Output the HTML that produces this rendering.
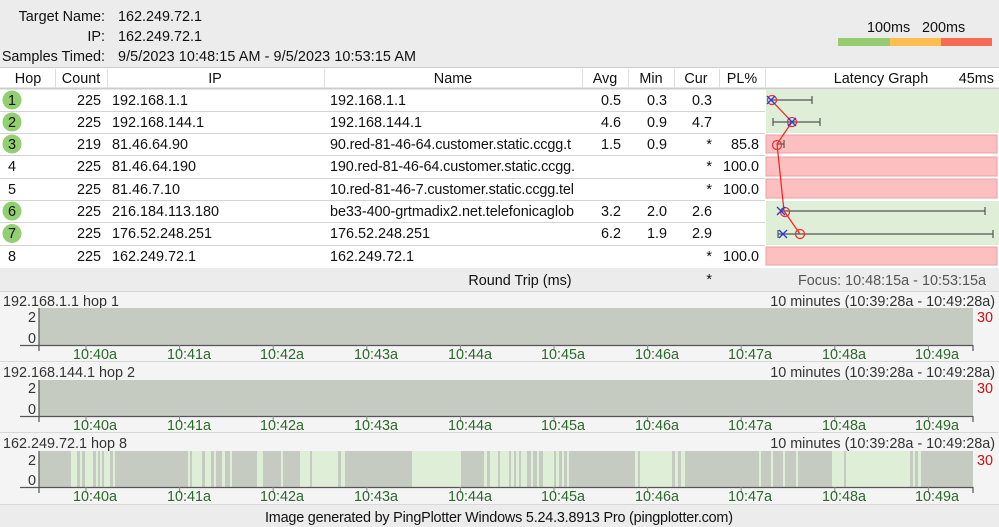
<!DOCTYPE html>
<html><head><meta charset="utf-8"><style>
html,body{margin:0;padding:0;background:#ececec;}
svg{display:block;font-family:"Liberation Sans","DejaVu Sans",sans-serif;font-size:14.4px;}
</style></head><body>
<svg width="999" height="527" viewBox="0 0 999 527" xmlns="http://www.w3.org/2000/svg">
<rect width="999" height="527" fill="#ececec"/>
<g fill="#111">
<text x="105" y="21" text-anchor="end">Target Name:</text>
<text x="118" y="21">162.249.72.1</text>
<text x="105" y="41" text-anchor="end">IP:</text>
<text x="118" y="41">162.249.72.1</text>
<text x="105" y="61" text-anchor="end">Samples Timed:</text>
<text x="118" y="61" textLength="298">9/5/2023 10:48:15 AM - 9/5/2023 10:53:15 AM</text>
<text x="867" y="32">100ms</text>
<text x="922" y="32">200ms</text>
</g>
<rect x="838" y="38" width="52" height="8" fill="#95cc6f"/>
<rect x="890" y="38" width="51" height="8" fill="#fdbd4f"/>
<rect x="941" y="38" width="51" height="8" fill="#f76b55"/>
<rect x="0" y="67" width="999" height="201" fill="#fff"/>
<line x1="0" y1="67.5" x2="999" y2="67.5" stroke="#ccc"/>
<line x1="0" y1="88.5" x2="999" y2="88.5" stroke="#ccc" stroke-width="2"/>
<g stroke="#ddd">
<line x1="55.5" y1="69" x2="55.5" y2="88"/><line x1="107.5" y1="69" x2="107.5" y2="88"/>
<line x1="324.5" y1="69" x2="324.5" y2="88"/><line x1="582.5" y1="69" x2="582.5" y2="88"/>
<line x1="628.5" y1="69" x2="628.5" y2="88"/><line x1="674.5" y1="69" x2="674.5" y2="88"/>
<line x1="719.5" y1="69" x2="719.5" y2="88"/><line x1="765.5" y1="69" x2="765.5" y2="88"/>
</g>
<g fill="#111" text-anchor="middle">
<text x="28" y="83">Hop</text><text x="81" y="83">Count</text><text x="215" y="83">IP</text>
<text x="453" y="83">Name</text><text x="605" y="83">Avg</text><text x="651" y="83">Min</text>
<text x="696" y="83">Cur</text><text x="742" y="83">PL%</text><text x="881" y="83">Latency Graph</text>
</g>
<text x="994" y="83" text-anchor="end" fill="#111">45ms</text>
<rect x="766" y="90" width="233" height="43" fill="#dfeed6"/>
<rect x="766" y="135" width="231" height="18" fill="#fcc0c0" stroke="#eca0a0"/>
<rect x="766" y="157" width="231" height="19" fill="#fcc0c0" stroke="#eca0a0"/>
<rect x="766" y="179" width="231" height="19" fill="#fcc0c0" stroke="#eca0a0"/>
<rect x="766" y="201" width="233" height="44" fill="#dfeed6"/>
<rect x="766" y="247" width="231" height="18" fill="#fcc0c0" stroke="#eca0a0"/>
<g stroke="#d4d4d4">
<line x1="0" y1="111.5" x2="765" y2="111.5"/><line x1="0" y1="133.5" x2="765" y2="133.5"/>
<line x1="0" y1="155.5" x2="765" y2="155.5"/><line x1="0" y1="178.5" x2="765" y2="178.5"/>
<line x1="0" y1="200.5" x2="765" y2="200.5"/><line x1="0" y1="222.5" x2="765" y2="222.5"/>
<line x1="0" y1="245.5" x2="765" y2="245.5"/>
</g>
<g fill="#92cf70">
<circle cx="12" cy="100" r="9.5"/><circle cx="12" cy="122" r="9.5"/><circle cx="12" cy="144" r="9.5"/>
<circle cx="12" cy="211" r="9.5"/><circle cx="12" cy="233.5" r="9.5"/>
</g>
<g fill="#111">
<text x="8" y="105">1</text><text x="8" y="127">2</text><text x="8" y="149">3</text><text x="8" y="171">4</text>
<text x="8" y="194">5</text><text x="8" y="216">6</text><text x="8" y="238">7</text><text x="8" y="261">8</text>
</g>
<g fill="#111" text-anchor="end">
<text x="101" y="105">225</text><text x="101" y="127">225</text><text x="101" y="149">219</text><text x="101" y="171">225</text>
<text x="101" y="194">225</text><text x="101" y="216">225</text><text x="101" y="238">225</text><text x="101" y="261">225</text>
<text x="621" y="105">0.5</text><text x="667" y="105">0.3</text><text x="712" y="105">0.3</text>
<text x="621" y="127">4.6</text><text x="667" y="127">0.9</text><text x="712" y="127">4.7</text>
<text x="621" y="149">1.5</text><text x="667" y="149">0.9</text><text x="712" y="149">*</text><text x="759" y="149">85.8</text>
<text x="712" y="171">*</text><text x="759" y="171">100.0</text>
<text x="712" y="194">*</text><text x="759" y="194">100.0</text>
<text x="621" y="216">3.2</text><text x="667" y="216">2.0</text><text x="712" y="216">2.6</text>
<text x="621" y="238">6.2</text><text x="667" y="238">1.9</text><text x="712" y="238">2.9</text>
<text x="712" y="261">*</text><text x="759" y="261">100.0</text>
<text x="712" y="284">*</text>
</g>
<g fill="#111">
<text x="112" y="105">192.168.1.1</text><text x="112" y="127">192.168.144.1</text><text x="112" y="149">81.46.64.90</text>
<text x="112" y="171">81.46.64.190</text><text x="112" y="194">81.46.7.10</text><text x="112" y="216">216.184.113.180</text>
<text x="112" y="238">176.52.248.251</text><text x="112" y="261">162.249.72.1</text>
</g>
<g fill="#111">
<text x="330" y="105">192.168.1.1</text><text x="330" y="127">192.168.144.1</text>
<text x="330" y="149" textLength="241">90.red-81-46-64.customer.static.ccgg.t</text>
<text x="330" y="171" textLength="245">190.red-81-46-64.customer.static.ccgg.</text>
<text x="330" y="194" textLength="244">10.red-81-46-7.customer.static.ccgg.tel</text>
<text x="330" y="216" textLength="244">be33-400-grtmadix2.net.telefonicaglob</text>
<text x="330" y="238">176.52.248.251</text><text x="330" y="261">162.249.72.1</text>
</g>
<g stroke="#555" stroke-width="1.2">
<line x1="771" y1="100" x2="812" y2="100"/><line x1="812" y1="96" x2="812" y2="104"/>
<line x1="773" y1="122" x2="820" y2="122"/><line x1="773" y1="118" x2="773" y2="126"/><line x1="820" y1="118" x2="820" y2="126"/>
<line x1="777" y1="144" x2="784" y2="144"/><line x1="784" y1="140" x2="784" y2="148"/>
<line x1="780" y1="211" x2="985" y2="211"/><line x1="985" y1="207" x2="985" y2="215"/>
<line x1="778" y1="234" x2="993" y2="234"/><line x1="778" y1="230" x2="778" y2="238"/><line x1="993" y1="230" x2="993" y2="238"/>
</g>
<polyline points="771,100 792,122 777,144 784,211 800,234" fill="none" stroke="#f02020" stroke-width="1.2"/>
<g fill="none" stroke="#f03030" stroke-width="1.3">
<circle cx="772" cy="100" r="4.5"/><circle cx="792" cy="122" r="4.5"/><circle cx="777" cy="145" r="4.5"/>
<circle cx="785" cy="212" r="4.5"/><circle cx="800" cy="234" r="4.5"/>
</g>
<g stroke="#2a3ae0" stroke-width="1.3">
<path d="M767 96l8 8M775 96l-8 8"/><path d="M788 118l8 8M796 118l-8 8"/>
<path d="M777 207l8 8M785 207l-8 8"/><path d="M779 230l8 8M787 230l-8 8"/>
</g>
<text x="520" y="285" text-anchor="middle" fill="#111">Round Trip (ms)</text>
<text x="986" y="285" text-anchor="end" fill="#555">Focus: 10:48:15a - 10:53:15a</text>
<rect x="0" y="291" width="999" height="70" fill="#f4f4f4"/>
<rect x="0" y="362" width="999" height="70" fill="#f4f4f4"/>
<rect x="0" y="433" width="999" height="71" fill="#f4f4f4"/>
<g stroke="#d8d8d8"><line x1="0" y1="291.5" x2="999" y2="291.5"/><line x1="0" y1="361.5" x2="999" y2="361.5"/>
<line x1="0" y1="432.5" x2="999" y2="432.5"/><line x1="0" y1="504.5" x2="999" y2="504.5"/></g>
<g fill="#333">
<text x="3" y="306">192.168.1.1 hop 1</text><text x="995" y="306" text-anchor="end">10 minutes (10:39:28a - 10:49:28a)</text>
<text x="3" y="377">192.168.144.1 hop 2</text><text x="995" y="377" text-anchor="end">10 minutes (10:39:28a - 10:49:28a)</text>
<text x="3" y="448">162.249.72.1 hop 8</text><text x="995" y="448" text-anchor="end">10 minutes (10:39:28a - 10:49:28a)</text>
<text x="36" y="322" text-anchor="end">2</text><text x="36" y="343" text-anchor="end">0</text>
<text x="36" y="393" text-anchor="end">2</text><text x="36" y="414" text-anchor="end">0</text>
<text x="36" y="465" text-anchor="end">2</text><text x="36" y="485" text-anchor="end">0</text>
</g>
<g fill="#d01010">
<text x="977" y="322">30</text><text x="977" y="393">30</text><text x="977" y="465">30</text>
</g>
<rect x="39" y="308" width="934" height="37" fill="#c5cbc0"/>
<rect x="39" y="380" width="934" height="36" fill="#c5cbc0"/>
<rect x="39" y="451" width="934" height="36" fill="#c5cbc0"/>
<g fill="#dfeed6">
<rect x="71" y="451" width="6" height="36"/><rect x="80" y="451" width="2" height="36"/><rect x="85" y="451" width="8" height="36"/>
<rect x="96" y="451" width="2" height="36"/><rect x="100" y="451" width="2" height="36"/><rect x="104" y="451" width="6" height="36"/>
<rect x="113" y="451" width="2" height="36"/>
<rect x="188" y="451" width="2" height="36"/><rect x="192" y="451" width="10" height="36"/><rect x="205" y="451" width="6" height="36"/>
<rect x="214" y="451" width="2" height="36"/><rect x="222" y="451" width="3" height="36"/><rect x="230" y="451" width="2" height="36"/>
<rect x="257" y="451" width="6" height="36"/><rect x="281" y="451" width="2" height="36"/>
<rect x="300" y="451" width="10" height="36"/><rect x="312" y="451" width="26" height="36"/><rect x="341" y="451" width="4" height="36"/>
<rect x="412" y="451" width="49" height="36"/>
<rect x="484" y="451" width="3" height="36"/><rect x="490" y="451" width="8" height="36"/>
<rect x="500" y="451" width="9" height="36"/><rect x="511" y="451" width="3" height="36"/><rect x="516" y="451" width="3" height="36"/><rect x="521" y="451" width="6" height="36"/>
<rect x="531" y="451" width="2" height="36"/><rect x="537" y="451" width="2" height="36"/>
<rect x="543" y="451" width="11" height="36"/><rect x="556" y="451" width="3" height="36"/><rect x="562" y="451" width="2" height="36"/><rect x="567" y="451" width="2" height="36"/>
<rect x="635" y="451" width="3" height="36"/><rect x="640" y="451" width="32" height="36"/><rect x="675" y="451" width="3" height="36"/><rect x="681" y="451" width="4" height="36"/>
<rect x="759" y="451" width="2" height="36"/><rect x="771" y="451" width="2" height="36"/><rect x="783" y="451" width="2" height="36"/><rect x="796" y="451" width="2" height="36"/>
<rect x="832" y="451" width="12" height="36"/><rect x="846" y="451" width="64" height="36"/>
<rect x="913" y="451" width="2" height="36"/><rect x="918" y="451" width="3" height="36"/>
</g>
<g stroke="#555" stroke-width="1.2">
<path d="M20 345.5H973M39 308V351M973 345V351"/>
<path d="M20 416.5H973M39 380V422M973 416V422"/>
<path d="M20 487.5H973M39 451V493M973 487V493"/>
</g>
<g stroke="#888">
<path d="M86 345v6M179.6 345v6M273.2 345v6M366.8 345v6M460.4 345v6M554 345v6M647.6 345v6M741.2 345v6M834.8 345v6M928.4 345v6"/>
<path d="M86 416v6M179.6 416v6M273.2 416v6M366.8 416v6M460.4 416v6M554 416v6M647.6 416v6M741.2 416v6M834.8 416v6M928.4 416v6"/>
<path d="M86 487v6M179.6 487v6M273.2 487v6M366.8 487v6M460.4 487v6M554 487v6M647.6 487v6M741.2 487v6M834.8 487v6M928.4 487v6"/>
</g>
<g fill="#2b6a2b" text-anchor="middle">
<text x="95" y="359">10:40a</text><text x="189" y="359">10:41a</text><text x="282" y="359">10:42a</text><text x="376" y="359">10:43a</text><text x="470" y="359">10:44a</text>
<text x="563" y="359">10:45a</text><text x="657" y="359">10:46a</text><text x="750" y="359">10:47a</text><text x="844" y="359">10:48a</text><text x="937" y="359">10:49a</text>
<text x="95" y="430">10:40a</text><text x="189" y="430">10:41a</text><text x="282" y="430">10:42a</text><text x="376" y="430">10:43a</text><text x="470" y="430">10:44a</text>
<text x="563" y="430">10:45a</text><text x="657" y="430">10:46a</text><text x="750" y="430">10:47a</text><text x="844" y="430">10:48a</text><text x="937" y="430">10:49a</text>
<text x="95" y="501">10:40a</text><text x="189" y="501">10:41a</text><text x="282" y="501">10:42a</text><text x="376" y="501">10:43a</text><text x="470" y="501">10:44a</text>
<text x="563" y="501">10:45a</text><text x="657" y="501">10:46a</text><text x="750" y="501">10:47a</text><text x="844" y="501">10:48a</text><text x="937" y="501">10:49a</text>
</g>
<text x="499" y="522" text-anchor="middle" fill="#111" textLength="468">Image generated by PingPlotter Windows 5.24.3.8913 Pro (pingplotter.com)</text>
</svg>
</body></html>
